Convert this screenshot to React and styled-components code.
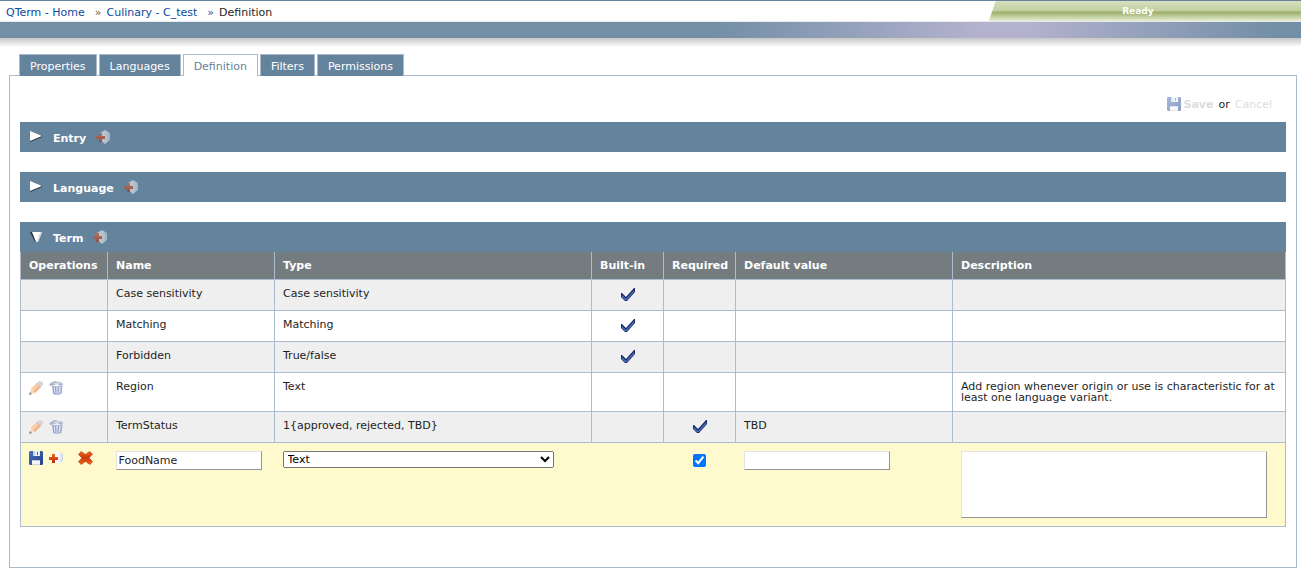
import { useState } from 'react';
import styled, { createGlobalStyle, css } from 'styled-components';

const TABS = ['Properties', 'Languages', 'Definition', 'Filters', 'Permissions'];

const COLUMNS = ['Operations', 'Name', 'Type', 'Built-in', 'Required', 'Default value', 'Description'];

const FIELDS = [
  { name: 'Case sensitivity', type: 'Case sensitivity', builtIn: true },
  { name: 'Matching', type: 'Matching', builtIn: true },
  { name: 'Forbidden', type: 'True/false', builtIn: true },
  {
    name: 'Region',
    type: 'Text',
    editable: true,
    description: 'Add region whenever origin or use is characteristic for at least one language variant.',
  },
  { name: 'TermStatus', type: '1{approved, rejected, TBD}', editable: true, required: true, defaultValue: 'TBD' },
];

const SaveIcon = () => (
  <svg width="14" height="14" viewBox="0 0 14 14" aria-hidden="true">
    <defs>
      <linearGradient id="disk" x1="0" y1="0" x2="1" y2="1">
        <stop offset="0" stopColor="#4a70bd" />
        <stop offset="1" stopColor="#233f8c" />
      </linearGradient>
    </defs>
    <path d="M0 1L1 0H13L14 1V13L13 14H1L0 13Z" fill="url(#disk)" />
    <path d="M4 0H11V5H4Z" fill="#e9edf4" />
    <path d="M4 0H6V5H4Z" fill="#c9d3e6" />
    <path d="M8 1H9V4H8Z" fill="#3b73a8" />
    <path d="M3 9H11V14H3Z" fill="#f6f6f6" />
    <path d="M3 9H11V10H3Z" fill="#c4cbd8" />
    <path d="M3 13H11V14H3Z" fill="#d5d5d5" />
  </svg>
);

const AddIcon = () => (
  <svg width="14" height="14" viewBox="0 0 14 14" aria-hidden="true">
    <defs>
      <linearGradient id="hex" x1="0" y1="0" x2="1" y2="0">
        <stop offset="0" stopColor="#ffffff" />
        <stop offset="0.6" stopColor="#f7f7f7" />
        <stop offset="1" stopColor="#cfd3d8" />
      </linearGradient>
      <linearGradient id="plus" x1="0" y1="0" x2="0" y2="1">
        <stop offset="0" stopColor="#ee6a2c" />
        <stop offset="1" stopColor="#b92600" />
      </linearGradient>
    </defs>
    <path d="M9 0L14 3V10L9 14L4 10V3Z" fill="url(#hex)" />
    <path d="M3 3H6V6H9V9H6V12H3V9H0V6H3Z" fill="url(#plus)" />
  </svg>
);

const DeleteIcon = () => (
  <svg width="15" height="14" viewBox="0 0 15 14" aria-hidden="true">
    <defs>
      <linearGradient id="cross" x1="0" y1="0" x2="0" y2="1">
        <stop offset="0" stopColor="#f0641c" />
        <stop offset="0.5" stopColor="#c83a06" />
        <stop offset="1" stopColor="#ee6a20" />
      </linearGradient>
    </defs>
    <path
      d="M3 0.5L7.5 3.5L11.5 0.5L14.5 3L11 7L14.5 10.5L12 13.5L7.5 10.5L3 13.5L0.5 10.5L4 7L0.5 3.5Z"
      fill="url(#cross)"
      stroke="#b83408"
      strokeWidth="0.6"
    />
  </svg>
);

const PencilIcon = () => (
  <svg width="14" height="14" viewBox="0 0 14 14" aria-hidden="true">
    <path d="M0 14L2 8L8 2L12 6L6 12Z" fill="#fbdcb9" />
    <path d="M4 10L10 4L12 6L6 12Z" fill="#f3b48e" />
    <path d="M2 8L8 2L9 3L3 9Z" fill="#f5c596" />
    <path d="M7 3L8 2L12 6L11 7Z" fill="#eeb9a8" />
    <path d="M8 2L10 0L14 1V4L12 6Z" fill="#d6d4de" />
    <path d="M0 14L1 11L3 13Z" fill="#85868f" />
  </svg>
);

const TrashIcon = () => (
  <svg width="14" height="14" viewBox="0 0 14 14" aria-hidden="true">
    <path d="M0 4C1 2 3 1 6 0L10 1C12 1 14 2 14 4L12 5L8 3L2 5Z" fill="#a9b5cb" />
    <path d="M4 2L9 1L12 3L5 3Z" fill="#d3dae7" />
    <path d="M3 5L13 5L12 13L10 14H6L4 13Z" fill="#b3bfda" />
    <path d="M5 6L6 12M8 6V13M11 6L10 12" stroke="#e9eefa" strokeWidth="1" />
    <path d="M4 5L5 13M13 5L12 13M6.5 6L7 12.5M9.5 6L9 12.5" stroke="#8494bd" strokeWidth="0.7" />
  </svg>
);

const CheckIcon = () => (
  <svg width="14" height="14" viewBox="0 0 14 14" role="img" aria-label="Yes">
    <path d="M0 5L1 5L5 9L13 0L14 0V4L6 13H4L0 9Z" fill="#1b2a68" />
    <path d="M1 7L5 11L13 2V4L6 12H4L1 9Z" fill="#4e72bd" />
  </svg>
);

const ArrowIcon = ({ open }) => (
  <svg width="12" height="12" viewBox="0 0 12 12" aria-hidden="true">
    {open ? (
      <>
        <path d="M0 1L5 11H8L3 1Z" fill="#2b3238" />
        <path d="M2 1H12L8 11H6Z" fill="#ffffff" />
        <path d="M10 1H12L8 11H7Z" fill="#d6dade" />
      </>
    ) : (
      <>
        <path d="M0 9V11L12 6V4Z" fill="#2b3238" />
        <path d="M0 0L12 5L0 10Z" fill="#ffffff" />
      </>
    )}
  </svg>
);

const Section = ({ title, open, onToggle, children }) => (
  <StSection>
    <StSectionBar>
      <StSectionTitle type="button" aria-expanded={open} onClick={onToggle}>
        <ArrowIcon open={open} />
        <span>{title}</span>
      </StSectionTitle>
      <StIconButton type="button" $faded aria-label={`Add field to ${title}`}>
        <AddIcon />
      </StIconButton>
    </StSectionBar>
    {open && children}
  </StSection>
);

const FieldRow = ({ field }) => (
  <StRow>
    <StCell>
      {field.editable && (
        <StOperations>
          <StIconButton type="button" aria-label={`Edit ${field.name}`}>
            <PencilIcon />
          </StIconButton>
          <StIconButton type="button" aria-label={`Delete ${field.name}`}>
            <TrashIcon />
          </StIconButton>
        </StOperations>
      )}
    </StCell>
    <StCell>{field.name}</StCell>
    <StCell>{field.type}</StCell>
    <StCell $center>{field.builtIn && <CheckIcon />}</StCell>
    <StCell $center>{field.required && <CheckIcon />}</StCell>
    <StCell>{field.defaultValue}</StCell>
    <StCell>{field.description}</StCell>
  </StRow>
);

const EditRow = () => {
  const [name, setName] = useState('FoodName');
  const [type, setType] = useState('Text');
  const [required, setRequired] = useState(true);
  const [defaultValue, setDefaultValue] = useState('');
  const [description, setDescription] = useState('');

  return (
    <StEditRow>
      <StCell>
        <StOperations>
          <StIconButton type="button" aria-label="Save field">
            <SaveIcon />
          </StIconButton>
          <StIconButton type="button" aria-label="Add value">
            <AddIcon />
          </StIconButton>
          <StCancelEdit type="button" aria-label="Cancel editing">
            <DeleteIcon />
          </StCancelEdit>
        </StOperations>
      </StCell>
      <StCell>
        <StInput aria-label="Name" value={name} onChange={(e) => setName(e.target.value)} />
      </StCell>
      <StCell>
        <StSelect aria-label="Type" value={type} onChange={(e) => setType(e.target.value)}>
          <option>Text</option>
          <option>True/false</option>
        </StSelect>
      </StCell>
      <StCell />
      <StCell $center>
        <StCheckbox
          type="checkbox"
          aria-label="Required"
          checked={required}
          onChange={(e) => setRequired(e.target.checked)}
        />
      </StCell>
      <StCell>
        <StInput aria-label="Default value" value={defaultValue} onChange={(e) => setDefaultValue(e.target.value)} />
      </StCell>
      <StCell>
        <StTextarea aria-label="Description" value={description} onChange={(e) => setDescription(e.target.value)} />
      </StCell>
    </StEditRow>
  );
};

const App = () => {
  const [activeTab, setActiveTab] = useState('Definition');
  const [opened, setOpened] = useState({ Term: true });
  const toggle = (title) => setOpened({ ...opened, [title]: !opened[title] });

  return (
    <>
      <GlobalStyle />
      <StHeader>
        <StBreadcrumb aria-label="Breadcrumb">
          <a href="#home">QTerm - Home</a>
          <StSeparator $first>»</StSeparator>
          <a href="#termbase">Culinary - C_test</a>
          <StSeparator>»</StSeparator>
          <span>Definition</span>
        </StBreadcrumb>
        <StStatus>Ready</StStatus>
      </StHeader>
      <StBanner />
      <StShadow />
      <StMain>
        <StTabs>
          {TABS.map((tab) => (
            <StTab key={tab} type="button" $active={tab === activeTab} onClick={() => setActiveTab(tab)}>
              {tab}
            </StTab>
          ))}
        </StTabs>
        <StPanel>
          <StActions>
            <StSave type="button" disabled>
              <SaveIcon />
              <span>Save</span>
            </StSave>
            or
            <StCancel type="button" disabled>
              Cancel
            </StCancel>
          </StActions>
          <Section title="Entry" open={!!opened.Entry} onToggle={() => toggle('Entry')} />
          <Section title="Language" open={!!opened.Language} onToggle={() => toggle('Language')} />
          <Section title="Term" open={!!opened.Term} onToggle={() => toggle('Term')}>
            <StTable>
              <colgroup>
                <StCol $width="87px" />
                <StCol $width="167px" />
                <StCol $width="317px" />
                <StCol $width="72px" />
                <StCol $width="72px" />
                <StCol $width="217px" />
                <StCol />
              </colgroup>
              <thead>
                <tr>
                  {COLUMNS.map((column) => (
                    <StHeadCell key={column} scope="col">
                      {column}
                    </StHeadCell>
                  ))}
                </tr>
              </thead>
              <tbody>
                {FIELDS.map((field) => (
                  <FieldRow key={field.name} field={field} />
                ))}
                <EditRow />
              </tbody>
            </StTable>
          </Section>
        </StPanel>
      </StMain>
    </>
  );
};

export default App;

const GlobalStyle = createGlobalStyle`
  * {
    box-sizing: border-box;
  }

  body {
    margin: 0;
    background: #ffffff;
    color: #1e1e1e;
  }

  body, button, input, select, textarea {
    font-family: Verdana, 'DejaVu Sans', sans-serif;
    font-size: 11px;
  }

  svg {
    display: block;
  }
`;

const buttonReset = css`
  padding: 0;
  border: 0;
  background: none;
  cursor: pointer;
`;

const StHeader = styled.header`
  display: flex;
  justify-content: space-between;

  height: 22px;
  border-top: 1px solid #64839d;
  border-bottom: 1px solid #e8eaec;
`;

const StBreadcrumb = styled.nav`
  display: flex;
  align-items: center;

  padding: 2px 0 0 6px;

  a {
    color: #0b4a9e;
    text-decoration: none;
  }
`;

const StSeparator = styled.span`
  margin: 0 5px 0 10px;
  color: ${({ $first }) => ($first ? '#8a5a3c' : '#2a5a9a')};
`;

const StStatus = styled.div`
  width: 24%;
  padding-right: 14px;
  background: linear-gradient(#d6dfc0 0, #c1cf9f 10px, #98ad62 11px, #adbc80 13px, #c5d2a4 16px, #e6ecd6 20px);
  clip-path: polygon(7px 0, 100% 0, 100% 100%, 0 100%);
  color: #ffffff;
  font-size: 9px;
  font-weight: 700;
  line-height: 20px;
  text-align: center;
`;

const StBanner = styled.div`
  height: 16px;
  background: linear-gradient(90deg, #738fa6 55%, #b3b1ce 75%, #b3b1ce 79%, #738fa6 98%);
`;

const StShadow = styled.div`
  height: 10px;
  background: linear-gradient(#c6c6c6, #ffffff 90%);
`;

const StMain = styled.main`
  padding: 6px 4px 5px 9px;
`;

const StTabs = styled.div`
  display: flex;
  gap: 2px;

  padding-left: 10px;
`;

const StTab = styled.button`
  position: relative;
  z-index: 1;

  height: 22px;
  margin-bottom: ${({ $active }) => ($active ? '-1px' : '0')};
  padding: 2px 10px 0;
  border: 1px solid #aabaca;
  border-bottom: 0;
  background: ${({ $active }) => ($active ? '#ffffff' : '#64839d')};
  color: ${({ $active }) => ($active ? '#64839d' : '#ffffff')};
  cursor: pointer;
`;

const StPanel = styled.div`
  margin-top: -1px;
  padding: 0 10px 40px;
  border: 1px solid #aabacc;
`;

const StActions = styled.div`
  display: flex;
  align-items: center;
  justify-content: flex-end;
  gap: 5px;

  height: 46px;
  padding: 10px 14px 0 0;
`;

const StSave = styled.button`
  ${buttonReset}
  display: flex;
  align-items: center;
  gap: 2px;

  color: #dcdcdc;
  font-weight: 700;

  svg {
    opacity: 0.5;
  }
`;

const StCancel = styled.button`
  ${buttonReset}
  color: #dcdcdc;
`;

const StSection = styled.section`
  & + & {
    margin-top: 20px;
  }
`;

const StSectionBar = styled.div`
  display: flex;
  align-items: center;
  gap: 10px;

  height: 30px;
  padding-left: 10px;
  background: #64839d;
`;

const StSectionTitle = styled.button`
  ${buttonReset}
  display: flex;
  align-items: center;
  gap: 11px;

  color: #ffffff;
  font-weight: 700;

  span {
    padding-top: 2px;
  }
`;

const StIconButton = styled.button`
  ${buttonReset}
  opacity: ${({ $faded }) => ($faded ? 0.55 : 1)};
`;

const StCancelEdit = styled(StIconButton)`
  margin-left: 9px;
`;

const StOperations = styled.div`
  display: flex;
  gap: 6px;

  height: 14px;
`;

const StTable = styled.table`
  width: 100%;
  border-collapse: collapse;
  table-layout: fixed;
`;

const StCol = styled.col`
  width: ${({ $width }) => $width || 'auto'};
`;

const StHeadCell = styled.th`
  padding: 8px;
  border: 1px solid #aabccd;
  border-top: 0;
  background: #747c80;
  color: #ffffff;
  font-weight: 700;
  line-height: 11px;
  text-align: left;
  white-space: nowrap;
`;

const StCell = styled.td`
  height: 31px;
  padding: 8px;
  border: 1px solid #aabccd;
  line-height: 11px;
  vertical-align: top;

  svg {
    margin: ${({ $center }) => ($center ? '0 auto' : '0')};
  }
`;

const StRow = styled.tr`
  background: #ffffff;

  &:nth-child(odd) {
    background: #efefef;
  }
`;

const StEditRow = styled.tr`
  background: #fffacd;

  ${StCell} {
    border-right-width: 0;
    border-left-width: 0;
  }

  ${StCell}:first-child {
    border-left-width: 1px;
  }

  ${StCell}:last-child {
    border-right-width: 1px;
  }
`;

const fieldBorder = css`
  border: 1px solid;
  border-color: #e3e3e3 #949494 #949494 #e3e3e3;
  border-radius: 0;
  background: #ffffff;
  color: #1e1e1e;
`;

const StInput = styled.input`
  ${fieldBorder}
  display: block;

  width: 146px;
  height: 19px;
  padding: 0 2px;
`;

const StSelect = styled.select`
  display: block;

  width: 271px;
  height: 17px;
`;

const StCheckbox = styled.input`
  display: block;

  width: 13px;
  height: 13px;
  margin: 3px auto 0;
`;

const StTextarea = styled.textarea`
  ${fieldBorder}
  display: block;

  width: 306px;
  max-width: 100%;
  height: 67px;
  resize: none;
`;
